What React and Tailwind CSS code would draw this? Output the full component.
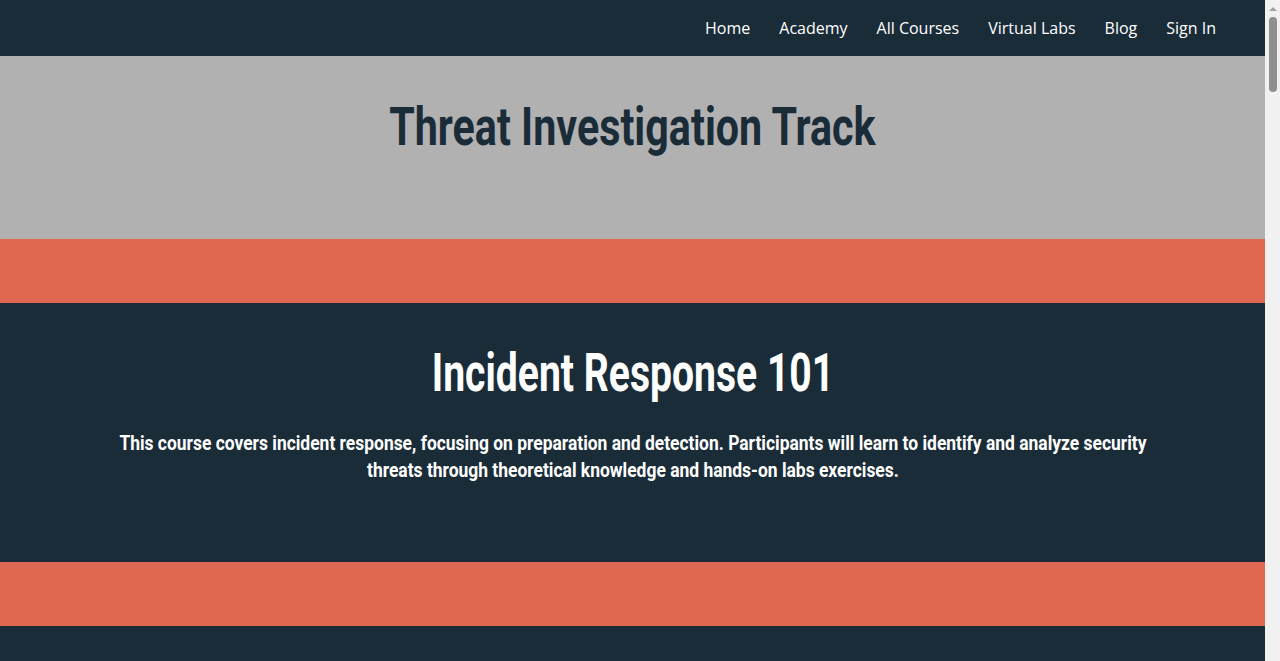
const navLinks = ['Home', 'Academy', 'All Courses', 'Virtual Labs', 'Blog', 'Sign In'];

// Barlow-like condensed look: Roboto bold squeezed horizontally
const condensed = "inline-block font-['Roboto',sans-serif] font-bold";

const App = () => {
    return (
        <div className="h-screen flex overflow-hidden bg-[#1b2c39] font-['Open_Sans',sans-serif]">
            <div className="flex-1">
                {/* Nav */}
                <nav className="h-14 bg-[#1b2c39] flex items-center justify-end pr-[49px]">
                    <ul className="flex items-center gap-[29px]">
                        {navLinks.map(link => (
                            <li key={link}>
                                <a href="#" className="text-white text-base">{link}</a>
                            </li>
                        ))}
                    </ul>
                </nav>

                {/* Track title */}
                <header className="h-[183px] bg-[#b1b1b1] flex justify-center pt-[41px]">
                    <h1 className={`${condensed} scale-x-[0.764] text-[54px] leading-[60px] text-[#1b2c39] whitespace-nowrap`}>
                        Threat Investigation Track
                    </h1>
                </header>

                <div className="h-16 bg-[#e06852]" />

                {/* Course */}
                <section className="h-[259px] bg-[#1b2c39] flex flex-col items-center pt-[40px]">
                    <h2 className={`${condensed} scale-x-[0.724] text-[54px] leading-[60px] text-white whitespace-nowrap`}>
                        Incident Response 101
                    </h2>
                    <p className={`${condensed} scale-x-[0.872] mt-[27px] text-center text-[20px] leading-[27px] text-white whitespace-nowrap`}>
                        This course covers incident response, focusing on preparation and detection. Participants will learn to identify and analyze security<br />
                        threats through theoretical knowledge and hands-on labs exercises.
                    </p>
                </section>

                <div className="h-16 bg-[#e06852]" />

                <section className="h-[4900px] bg-[#1b2c39]" />
            </div>

            {/* Scrollbar */}
            <div className="w-[15px] bg-[#f1f1f1] flex flex-col items-center">
                <div className="h-[17px] flex items-center justify-center">
                    <div className="w-0 h-0 border-l-[4px] border-r-[4px] border-b-[4px] border-l-transparent border-r-transparent border-b-[#a3a3a3]" />
                </div>
                <div className="w-[8px] h-[75px] rounded-full bg-[#8f8f8f]" />
            </div>
        </div>
    );
};

export default App;
